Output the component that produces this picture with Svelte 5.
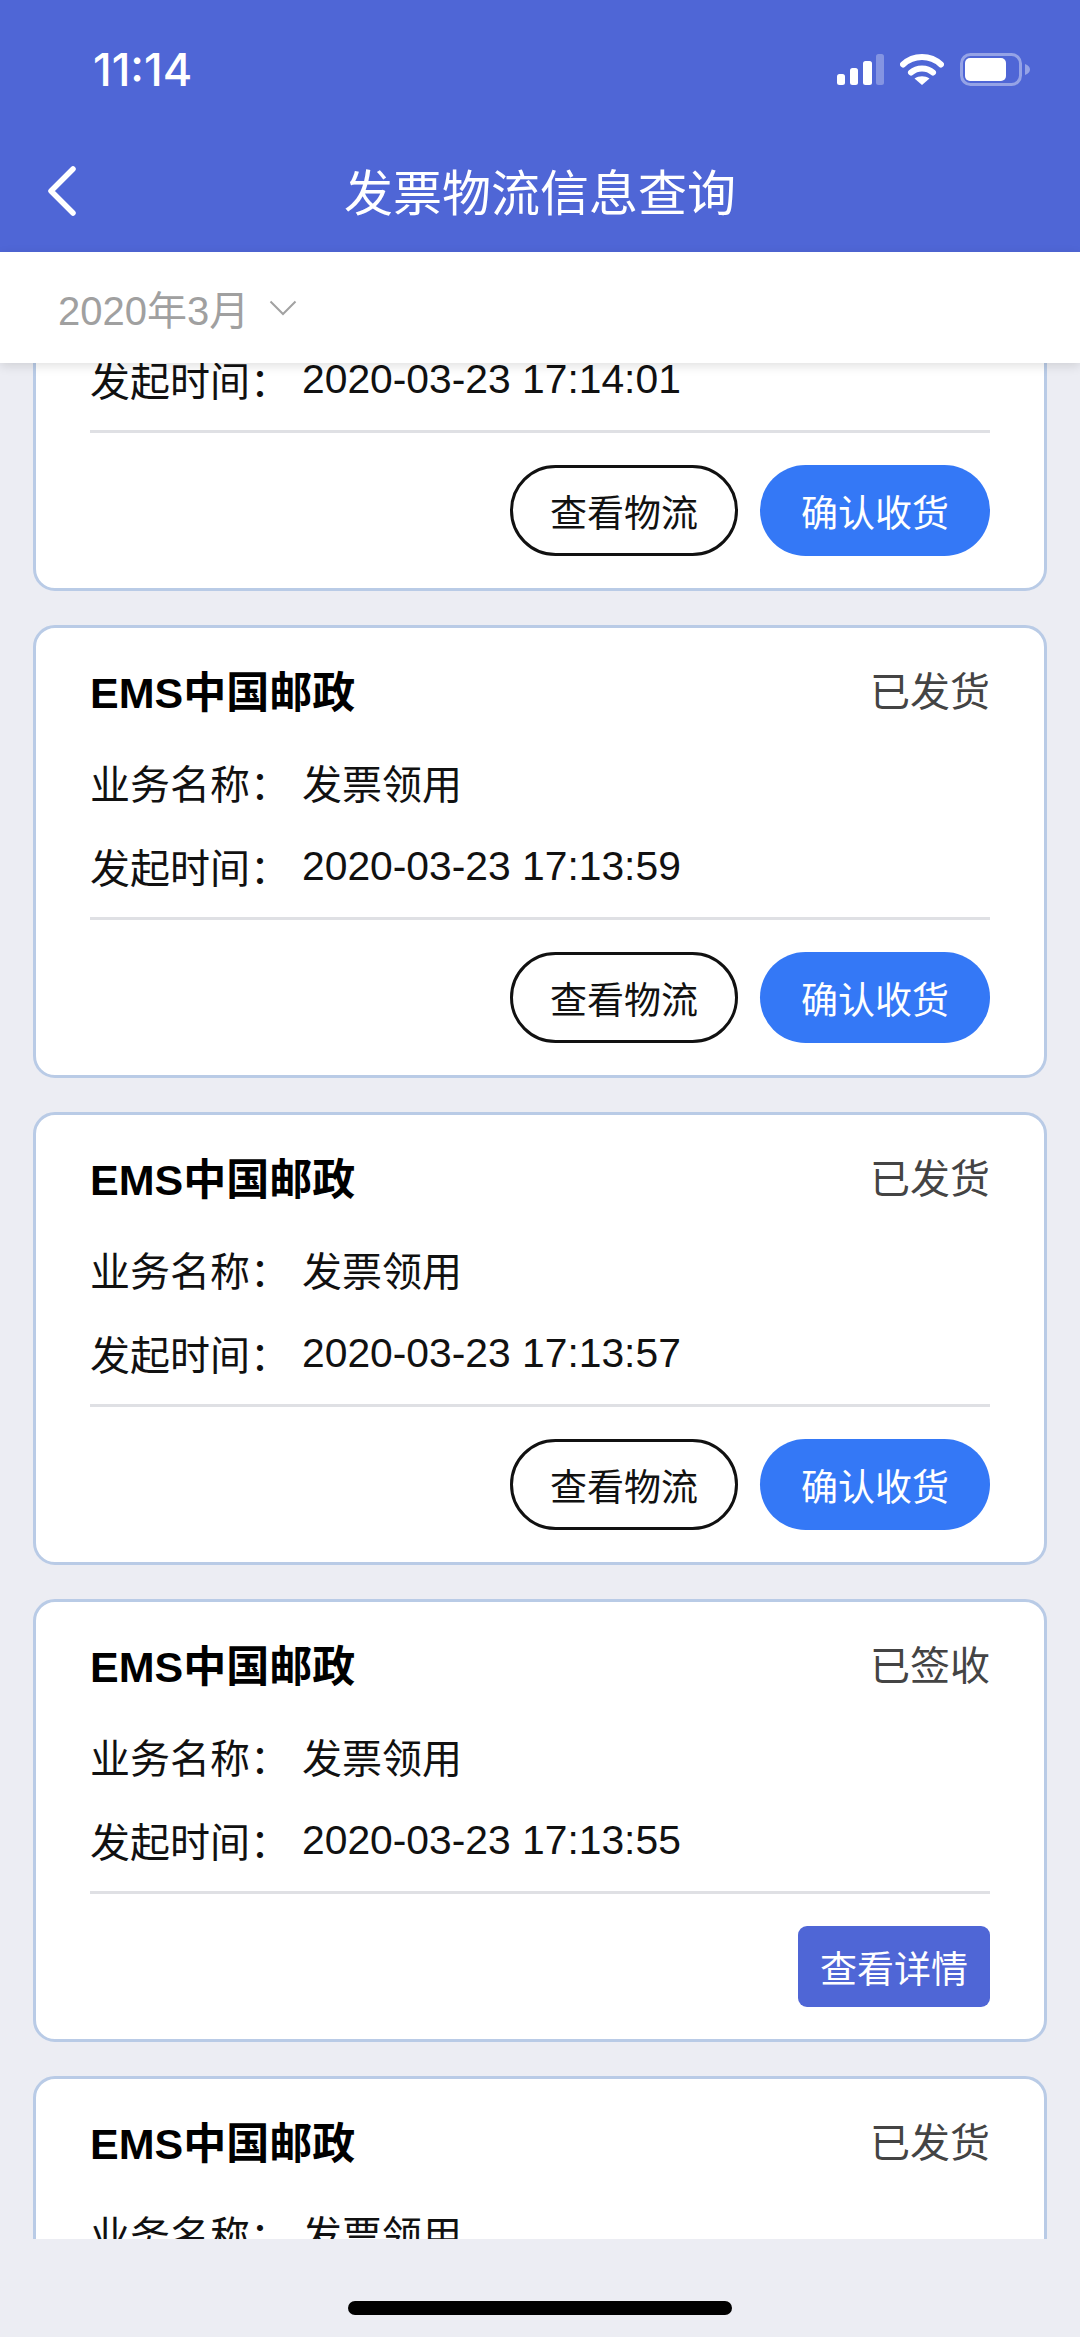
<script lang="ts">
  const orders = [
    { name: "EMS中国邮政", status: "已发货", biz: "发票领用", time: "2020-03-23 17:14:01", done: false },
    { name: "EMS中国邮政", status: "已发货", biz: "发票领用", time: "2020-03-23 17:13:59", done: false },
    { name: "EMS中国邮政", status: "已发货", biz: "发票领用", time: "2020-03-23 17:13:57", done: false },
    { name: "EMS中国邮政", status: "已签收", biz: "发票领用", time: "2020-03-23 17:13:55", done: true },
    { name: "EMS中国邮政", status: "已发货", biz: "发票领用", time: "2020-03-23 17:13:53", done: false },
  ];
</script>

<div class="page">
  <header class="header">
    <div class="status-bar">
      <span class="clock">11:14</span>
      <div class="status-icons">
        <svg class="signal" width="47" height="31" viewBox="0 0 47 31">
          <rect x="0" y="20" width="8" height="11" rx="2.5" fill="#fff" />
          <rect x="13" y="14" width="8" height="17" rx="2.5" fill="#fff" />
          <rect x="26" y="7" width="9" height="24" rx="2.5" fill="#fff" />
          <rect x="39" y="0" width="8" height="31" rx="2.5" fill="#fff" fill-opacity="0.3" />
        </svg>
        <svg class="wifi" width="44" height="32" viewBox="0 0 44 32">
          <path d="M3 11.5C13.5 1.5 30.5 1.5 41 11.5" fill="none" stroke="#fff" stroke-width="6" stroke-linecap="round" />
          <path d="M11 19.5C17 14 27 14 33 19.5" fill="none" stroke="#fff" stroke-width="6" stroke-linecap="round" />
          <path d="M14.5 25.5C19 22.5 25 22.5 29.5 25.5L22 32Z" fill="#fff" />
        </svg>
        <svg class="battery" width="70" height="33" viewBox="0 0 70 33">
          <rect x="1.5" y="1.5" width="59" height="30" rx="9" fill="none" stroke="#fff" stroke-opacity="0.4" stroke-width="3" />
          <rect x="5" y="5" width="41" height="23" rx="5" fill="#fff" />
          <path d="M65 11C68 12 70 14 70 16.5C70 19 68 21 65 22Z" fill="#fff" fill-opacity="0.4" />
        </svg>
      </div>
    </div>
    <nav class="nav">
      <button class="back" aria-label="返回">
        <svg width="32" height="52" viewBox="0 0 32 52">
          <path d="M27 4L5 26L27 48" fill="none" stroke="#fff" stroke-width="5.5" stroke-linecap="round" stroke-linejoin="round" />
        </svg>
      </button>
      <h1 class="title">发票物流信息查询</h1>
    </nav>
  </header>

  <div class="filter">
    <span class="month">2020年3月</span>
    <svg width="28" height="16" viewBox="0 0 28 16">
      <path d="M1.5 1.5L14 14L26.5 1.5" fill="none" stroke="#a2a2a2" stroke-width="2" />
    </svg>
  </div>

  <main class="list">
    <div class="list-inner">
      {#each orders as order}
        <section class="card">
          <div class="card-head">
            <span class="carrier">{order.name}</span>
            <span class="state">{order.status}</span>
          </div>
          <div class="row"><span class="key">业务名称：</span><span>{order.biz}</span></div>
          <div class="row"><span class="key">发起时间：</span><span class="time">{order.time}</span></div>
          <div class="divider"></div>
          <div class="actions">
            {#if order.done}
              <button class="btn-detail">查看详情</button>
            {:else}
              <button class="btn btn-outline">查看物流</button>
              <button class="btn btn-primary">确认收货</button>
            {/if}
          </div>
        </section>
      {/each}
    </div>
  </main>

  <footer class="home">
    <div class="home-bar"></div>
  </footer>
</div>

<style>
  :global(body) {
    margin: 0;
  }

  .page {
    width: 1080px;
    height: 2337px;
    display: flex;
    flex-direction: column;
    overflow: hidden;
    background: #ecedf3;
    font-family: "Liberation Sans", "Noto Sans CJK SC", sans-serif;
    color: #111;
  }

  .header {
    height: 252px;
    flex: none;
    background: #4f66d6;
    color: #fff;
  }

  .status-bar {
    height: 138px;
    display: flex;
    align-items: center;
    justify-content: space-between;
    padding: 0 50px 0 93px;
    box-sizing: border-box;
  }

  .clock {
    font-size: 45px;
    font-weight: 500;
    font-family: "Inter", "Liberation Sans", sans-serif;
  }

  .status-icons {
    display: flex;
    align-items: center;
    gap: 16px;
  }

  .nav {
    position: relative;
    height: 100px;
    padding-top: 6px;
    display: flex;
    align-items: center;
    justify-content: center;
  }

  .back {
    position: absolute;
    left: 46px;
    top: 27px;
    padding: 0;
    border: 0;
    background: none;
    line-height: 0;
  }

  .title {
    margin: 0;
    font-size: 49px;
    font-weight: 400;
    line-height: 100px;
  }

  .filter {
    position: relative;
    z-index: 2;
    flex: none;
    height: 111px;
    display: flex;
    align-items: center;
    gap: 20px;
    padding-left: 58px;
    background: #fff;
    box-shadow: 0 3px 10px rgba(0, 0, 0, 0.12);
  }

  .month {
    font-size: 40px;
    color: #a0a0a0;
  }

  .list {
    flex: 1;
    min-height: 0;
    overflow: hidden;
    padding: 0 33px;
  }

  .list-inner {
    display: flex;
    flex-direction: column;
    gap: 34px;
    margin-top: -225px;
  }

  .card {
    box-sizing: border-box;
    flex: none;
    padding: 33px 54px 32px;
    background: #fff;
    border: 3px solid #b9cbe6;
    border-radius: 22px;
  }

  .card-head {
    height: 56px;
    margin-bottom: 24px;
    display: flex;
    align-items: center;
    justify-content: space-between;
  }

  .carrier {
    font-size: 43px;
    font-weight: 700;
    color: #000;
  }

  .state {
    font-size: 40px;
    color: #444;
  }

  .row {
    height: 82px;
    display: flex;
    align-items: center;
    font-size: 40px;
    color: #111;
  }

  .row + .row {
    margin-top: 2px;
  }

  .key {
    width: 212px;
    flex: none;
  }

  .time {
    font-size: 40.8px;
  }

  .divider {
    height: 3px;
    margin-top: 10px;
    margin-bottom: 32px;
    background: #dfe0e4;
  }

  .actions {
    display: flex;
    justify-content: flex-end;
    gap: 22px;
  }

  .btn {
    box-sizing: border-box;
    width: 230px;
    height: 91px;
    padding: 0;
    border-radius: 46px;
    font-family: inherit;
    font-size: 37px;
  }

  .btn-outline {
    width: 228px;
    border: 3px solid #111;
    background: #fff;
    color: #111;
  }

  .btn-primary {
    border: 0;
    background: #3478f6;
    color: #fff;
  }

  .btn-detail {
    box-sizing: border-box;
    width: 192px;
    height: 81px;
    padding: 0;
    border: 0;
    border-radius: 9px;
    background: #4f66d6;
    color: #fff;
    font-family: inherit;
    font-size: 37px;
  }

  .home {
    flex: none;
    height: 98px;
    padding-top: 62px;
    box-sizing: border-box;
    position: relative;
    z-index: 1;
    background: #ecedf3;
  }

  .home-bar {
    width: 384px;
    height: 14px;
    margin: 0 auto;
    border-radius: 7px;
    background: #000;
  }
</style>
